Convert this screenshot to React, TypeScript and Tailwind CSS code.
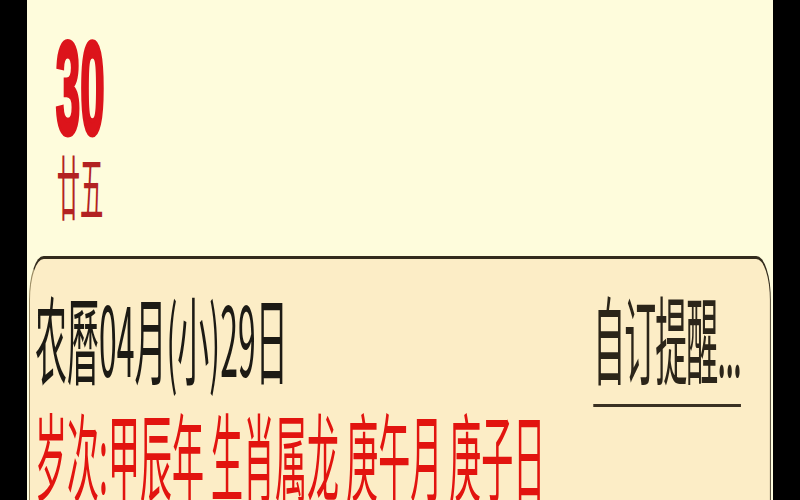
const cjk = "font-['Noto_Sans_CJK_SC',sans-serif]";

function DayHeader() {
  return (
    <div className="flex h-[256px] flex-col items-start pl-[86px] pt-[23px]">
      <span className="font-['Liberation_Sans',sans-serif] text-[132px] font-bold leading-none text-[#dc141b] [-webkit-text-stroke:5px_#dc141b]">
        30
      </span>
      <span className={`${cjk} -mt-[5px] pl-[3px] text-[70px] leading-none text-[#b22222]`}>廿五</span>
    </div>
  );
}

function LunarCard() {
  return (
    <div className="mx-[6px] h-[260px] rounded-t-[44px] border-[3px] border-b-0 border-[#332b1d] border-l-[#9a8a62] bg-[#fcedc6] pl-[15px] pr-[87px] pt-[18px]">
      <div className="flex items-start justify-between">
        <span className={`${cjk} text-[96px] leading-[117px] text-[#1c1a14]`}>农曆04月(小)29日</span>
        <span
          className={`${cjk} -mb-[13px] border-b-[3px] border-[#3a3122] pb-[10px] text-[96px] leading-[117px] tracking-[-3px] text-[#2b2519]`}
        >
          自订提醒...
        </span>
      </div>
      <div className={`${cjk} whitespace-nowrap text-[96px] leading-[117px] text-[#e2140f]`}>
        岁次:甲辰年 生肖属龙 庚午月 庚子日
      </div>
    </div>
  );
}

export default function App() {
  return (
    <div className="flex h-[500px] w-[800px] overflow-hidden bg-black px-[27px]">
      <div className="h-full w-[746px] shrink-0 overflow-hidden bg-[#fefcdc]">
        {/* the shot is squeezed sideways, so lay out wide and scale back */}
        <div className="w-[2238px] origin-top-left scale-x-[0.3333]">
          <DayHeader />
          <LunarCard />
        </div>
      </div>
    </div>
  );
}
